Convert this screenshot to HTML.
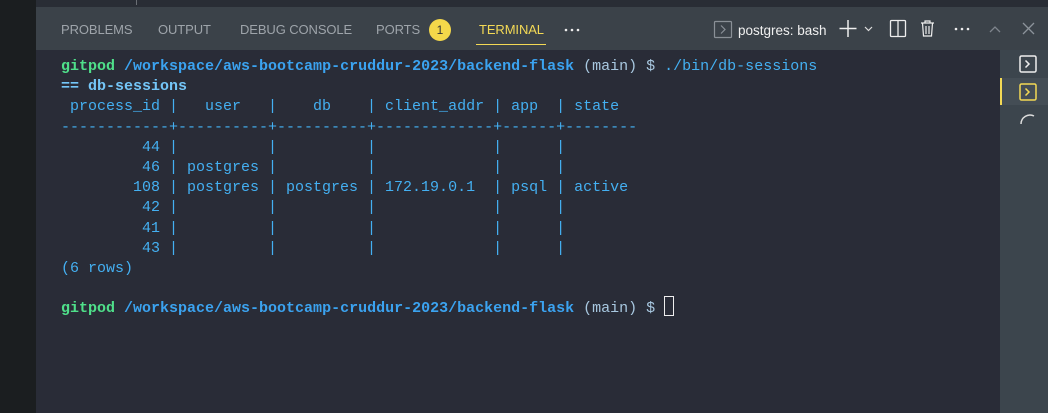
<!DOCTYPE html>
<html><head><meta charset="utf-8"><style>
*{margin:0;padding:0;box-sizing:border-box}
body{width:1048px;height:413px;overflow:hidden;background:#292c37;position:relative;font-family:"Liberation Sans",sans-serif}
.abs{position:absolute}
#left{left:0;top:0;width:36px;height:413px;background:#1b1e20}
#top{left:36px;top:0;width:1012px;height:7px;background:#292d35}
#hdr{left:36px;top:7px;width:1012px;height:43px;background:#3b4249}
.tab{position:absolute;top:22px;font-size:13px;color:#9ea4aa;letter-spacing:-0.1px}
#side{left:1000px;top:50px;width:48px;height:363px;background:#3c454d}
#term{left:61px;top:57px;font-family:"Liberation Mono",monospace;font-size:15px;line-height:20.2px;white-space:pre;color:#44b0f2}
.g{color:#4fe08a;font-weight:bold}
.p{color:#3ba3f0;font-weight:bold}
.m{color:#a8c8e0}
.b{color:#74c6f8;font-weight:bold}
</style></head><body>
<div class="abs" id="left"></div>
<div class="abs" id="top"></div>
<div class="abs" style="left:136px;top:0;width:1px;height:5px;background:#6a6e74"></div>
<div class="abs" id="hdr"></div>
<div class="tab" style="left:61px">PROBLEMS</div>
<div class="tab" style="left:158px">OUTPUT</div>
<div class="tab" style="left:240px">DEBUG CONSOLE</div>
<div class="tab" style="left:376px">PORTS</div>
<div class="abs" style="left:429px;top:19px;width:22px;height:22px;border-radius:11px;background:#f4d84a;color:#333;font-size:12px;text-align:center;line-height:22px">1</div>
<div class="tab" style="left:479px;color:#f3d955">TERMINAL</div>
<div class="abs" style="left:476px;top:44px;width:70px;height:1px;background:#f3d955"></div>
<svg class="abs" style="left:560px;top:20px" width="30" height="20"><circle cx="6" cy="10" r="1.3" fill="#eee"/><circle cx="12" cy="10" r="1.3" fill="#eee"/><circle cx="18" cy="10" r="1.3" fill="#eee"/></svg>
<svg class="abs" style="left:700px;top:10px" width="348" height="40" viewBox="0 0 348 40">
<rect x="14.5" y="11.5" width="17" height="16" rx="1" fill="none" stroke="#8a9097" stroke-width="1.2"/>
<path d="M21 15.5l4 4-4 4" fill="none" stroke="#8a9097" stroke-width="1.2"/>
<text x="38" y="25" font-family="Liberation Sans" font-size="13.5" fill="#f0f0f0">postgres: bash</text>
<path d="M148 10v17M139.5 18.5h17" stroke="#eee" stroke-width="1.5"/>
<path d="M165 17l3.5 3.5 3.5-3.5" fill="none" stroke="#ddd" stroke-width="1.2"/>
<rect x="190.5" y="10.5" width="15" height="16" rx="1" fill="none" stroke="#eee" stroke-width="1.3"/>
<path d="M198 10.5v16" stroke="#eee" stroke-width="1.3"/>
<path d="M221 13h13M225 13v-2h5v2M222.5 13l1 13h8l1-13M226 16v8M229 16v8" fill="none" stroke="#eee" stroke-width="1.2"/>
<circle cx="256" cy="19" r="1.3" fill="#eee"/><circle cx="262" cy="19" r="1.3" fill="#eee"/><circle cx="268" cy="19" r="1.3" fill="#eee"/>
<path d="M290 22l5-5 5 5" fill="none" stroke="#7e858c" stroke-width="1.3"/>
<path d="M323 13l11 11M334 13l-11 11" stroke="#8c939a" stroke-width="1.3"/>
</svg>
<div class="abs" id="side"></div>
<div class="abs" style="left:1000px;top:78px;width:48px;height:27px;background:#444d55"></div>
<div class="abs" style="left:1000px;top:78px;width:2px;height:27px;background:#f3d955"></div>
<svg class="abs" style="left:1000px;top:50px" width="48" height="80">
<rect x="20" y="6" width="16" height="16" rx="1.5" fill="none" stroke="#eee" stroke-width="1.5"/>
<path d="M25.5 10.5l3.5 3.5-3.5 3.5" fill="none" stroke="#eee" stroke-width="1.5"/>
<rect x="20" y="34" width="16" height="16" rx="1.5" fill="none" stroke="#f3d955" stroke-width="1.5"/>
<path d="M25.5 38.5l3.5 3.5-3.5 3.5" fill="none" stroke="#f3d955" stroke-width="1.5"/>
<path d="M21 74a9 9 0 0 1 13-8" fill="none" stroke="#ddd" stroke-width="1.5"/>
</svg>
<div class="abs" id="term"><span class="g">gitpod</span> <span class="p">/workspace/aws-bootcamp-cruddur-2023/backend-flask</span> <span class="m">(main)</span> <span class="m">$</span> ./bin/db-sessions
<span class="b">== db-sessions</span>
 process_id |   user   |    db    | client_addr | app  | state
------------+----------+----------+-------------+------+--------
         44 |          |          |             |      |
         46 | postgres |          |             |      |
        108 | postgres | postgres | 172.19.0.1  | psql | active
         42 |          |          |             |      |
         41 |          |          |             |      |
         43 |          |          |             |      |
(6 rows)

<span class="g">gitpod</span> <span class="p">/workspace/aws-bootcamp-cruddur-2023/backend-flask</span> <span class="m">(main)</span> <span class="m">$</span> </div>
<div class="abs" style="left:664px;top:296px;width:10px;height:20px;border:1.5px solid #eee"></div>
</body></html>
